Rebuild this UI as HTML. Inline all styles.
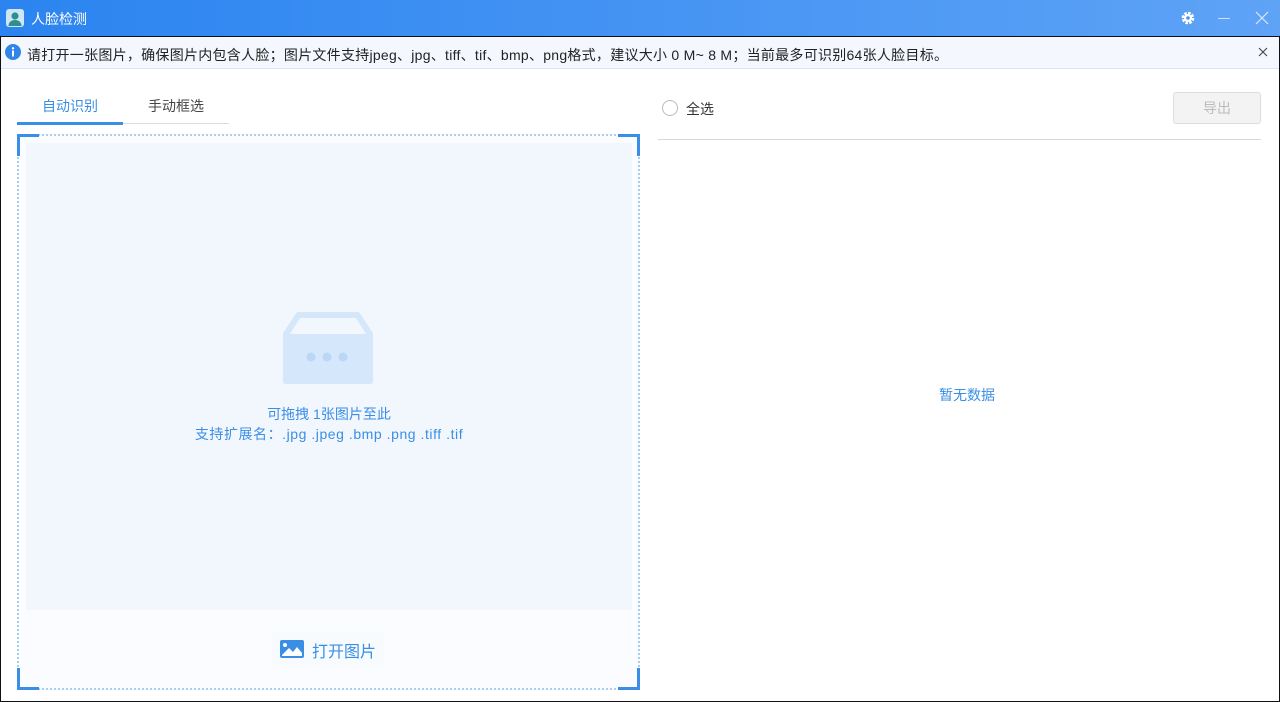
<!DOCTYPE html>
<html><head><meta charset="utf-8"><style>
*{margin:0;padding:0;box-sizing:border-box}
body{width:1280px;height:702px;overflow:hidden;background:#fff;font-family:"Liberation Sans","Noto Sans CJK SC",sans-serif;position:relative}
.abs{position:absolute}
.title{left:0;top:0;width:1280px;height:36px;background:linear-gradient(90deg,#2b84f0,#5ea3f6);color:#fff;font-size:14px}
.frame{left:0;top:36px;width:1280px;height:666px;border:1px solid #111;border-top:1px solid #111}
.info{left:1px;top:37px;width:1278px;height:32px;background:#f4f8fe;border-bottom:1px solid #dde6f0;font-size:14px;color:#222}
.txt{white-space:nowrap}
</style></head><body>
<div class="abs title">
 <svg class="abs" style="left:6px;top:9px" width="18" height="18" viewBox="0 0 18 18"><rect width="18" height="18" rx="3" fill="#cfe6f5"/><circle cx="9" cy="7" r="3.6" fill="#2e8f8f"/><path d="M2.5 17c0-4 3-6 6.5-6s6.5 2 6.5 6z" fill="#2e8f8f"/></svg>
 <div class="abs txt" style="left:31px;top:9px">人脸检测</div>
 <svg class="abs" style="left:1181px;top:11px" width="14" height="14" viewBox="0 0 14 14"><circle cx="7" cy="7" r="4.6" fill="none" stroke="#fff" stroke-width="3.4" stroke-dasharray="2.4 1.2"/><circle cx="7" cy="7" r="4" fill="#fff"/><circle cx="7" cy="7" r="1.8" fill="#4a94f2"/></svg>
 <div class="abs" style="left:1218px;top:18px;width:12px;height:1px;background:#cfe2fb"></div>
 <svg class="abs" style="left:1255px;top:11px" width="14" height="14" viewBox="0 0 14 14"><path d="M1 1L13 13M13 1L1 13" stroke="#d8e8fc" stroke-width="1.2"/></svg>
</div>
<div class="abs frame"></div>
<div class="abs info">
 <svg class="abs" style="left:4px;top:7px" width="16" height="16" viewBox="0 0 16 16"><circle cx="8" cy="8" r="8" fill="#2f86e8"/><rect x="7" y="6.5" width="2" height="6" fill="#fff"/><circle cx="8" cy="4.3" r="1.2" fill="#fff"/></svg>
 <div class="abs txt" style="left:26px;top:8px;letter-spacing:0.27px">请打开一张图片，确保图片内包含人脸；图片文件支持jpeg、jpg、tiff、tif、bmp、png格式，建议大小 0 M~ 8 M；当前最多可识别64张人脸目标。</div>
 <svg class="abs" style="left:1257px;top:10px" width="10" height="10" viewBox="0 0 10 10"><path d="M1 1L9 9M9 1L1 9" stroke="#444" stroke-width="1.1"/></svg>
</div>
<div class="abs txt" style="left:42px;top:96px;font-size:14px;color:#3a8ee6">自动识别</div>
<div class="abs txt" style="left:148px;top:96px;font-size:14px;color:#444">手动框选</div>
<div class="abs" style="left:17px;top:123px;width:212px;height:1px;background:#ddd"></div>
<div class="abs" style="left:17px;top:122px;width:106px;height:3px;background:#3a8ee6"></div>
<div class="abs" style="left:17px;top:134px;width:623px;height:556px;border:2px dotted #a8d0ee;background:#fafcff"></div>
<div class="abs" style="left:26px;top:143px;width:606px;height:467px;background:#f2f7fe"></div>
<div class="abs" style="left:17px;top:134px;width:22px;height:22px;border-left:3px solid #3a8ee6;border-top:3px solid #3a8ee6"></div>
<div class="abs" style="left:618px;top:134px;width:22px;height:22px;border-right:3px solid #3a8ee6;border-top:3px solid #3a8ee6"></div>
<div class="abs" style="left:17px;top:668px;width:22px;height:22px;border-left:3px solid #3a8ee6;border-bottom:3px solid #3a8ee6"></div>
<div class="abs" style="left:618px;top:668px;width:22px;height:22px;border-right:3px solid #3a8ee6;border-bottom:3px solid #3a8ee6"></div>
<svg class="abs" style="left:283px;top:312px" width="90" height="72" viewBox="0 0 90 72"><path d="M14 0H76L90 21V69Q90 72 87 72H3Q0 72 0 69V21Z" fill="#d4e7fb"/><path d="M17 6H73L83 22H7Z" fill="#f2f7fe"/><circle cx="28" cy="45" r="4.5" fill="#b9d8f8"/><circle cx="44" cy="45" r="4.5" fill="#b9d8f8"/><circle cx="60" cy="45" r="4.5" fill="#b9d8f8"/></svg>
<div class="abs txt" style="left:0;width:658px;text-align:center;top:404px;font-size:14px;color:#3a8ee6;line-height:20px">可拖拽 1张图片至此<br><span style="letter-spacing:0.55px">支持扩展名：.jpg .jpeg .bmp .png .tiff .tif</span></div>
<div class="abs" style="left:272px;top:632px;width:112px;height:33px;background:#f8fbfe"></div>
<svg class="abs" style="left:280px;top:640px" width="24" height="18" viewBox="0 0 24 18"><rect width="24" height="18" rx="2" fill="#3a8ee6"/><circle cx="5" cy="5" r="2" fill="#fff"/><path d="M2 15L9 8L13 12L17 7L22 13V16H2Z" fill="#fff"/></svg>
<div class="abs txt" style="left:312px;top:638px;font-size:16px;color:#3a8ee6">打开图片</div>
<div class="abs" style="left:662px;top:100px;width:16px;height:16px;border:1px solid #bbb;border-radius:50%"></div>
<div class="abs txt" style="left:686px;top:99px;font-size:14px;color:#333">全选</div>
<div class="abs" style="left:1173px;top:92px;width:88px;height:32px;border:1px solid #ddd;border-radius:3px;background:#f3f3f3;color:#bbb;font-size:14px;text-align:center;line-height:30px">导出</div>
<div class="abs" style="left:658px;top:139px;width:603px;height:1px;background:#d8d8d8"></div>
<div class="abs txt" style="left:939px;top:385px;font-size:14px;color:#3a8ee6">暂无数据</div>
</body></html>
